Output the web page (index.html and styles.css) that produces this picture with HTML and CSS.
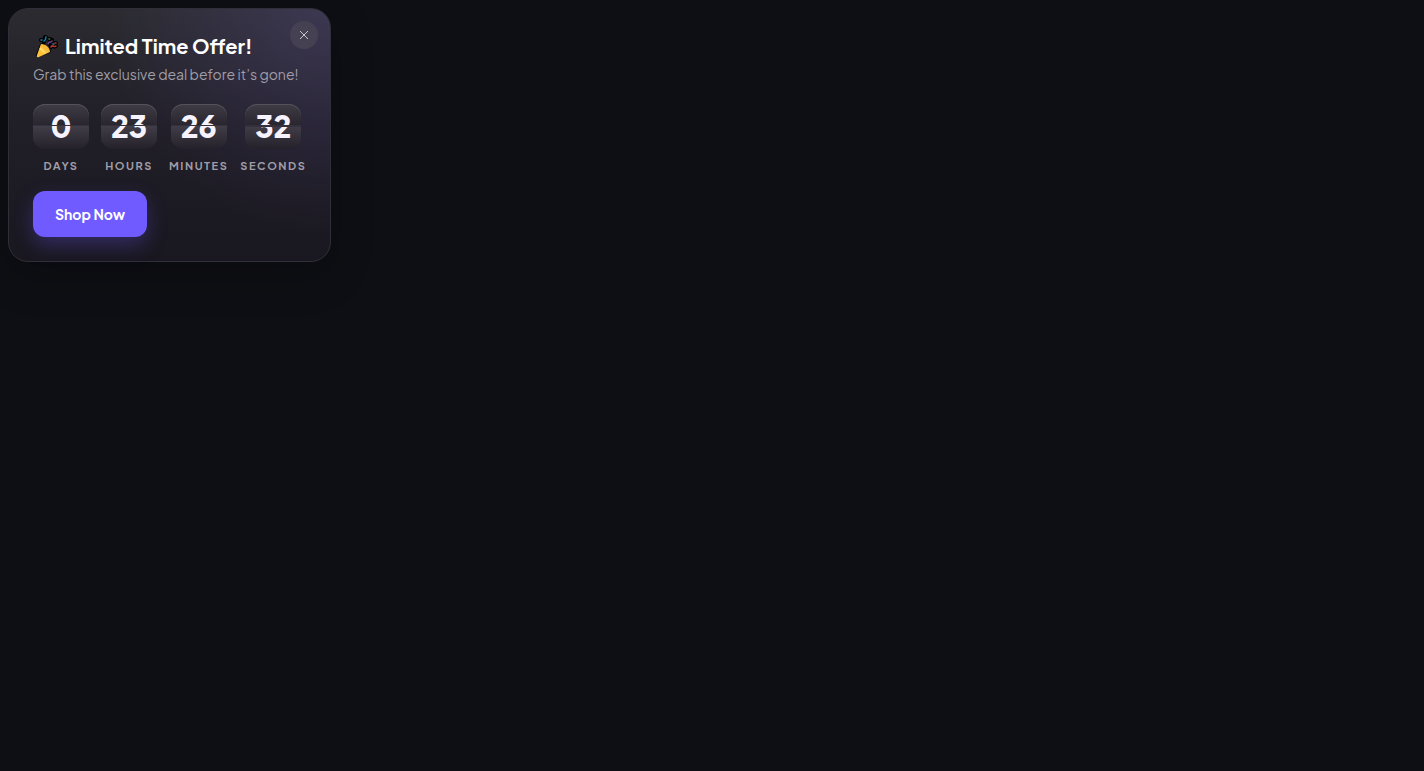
FILE: index.html
```html
<!DOCTYPE html>
<html lang="en">
<head>
<meta charset="utf-8">
<meta name="viewport" content="width=device-width, initial-scale=1">
<title>Limited Time Offer</title>
<link rel="stylesheet" href="styles.css">
</head>
<body>
<section class="offer" aria-labelledby="offer-title">
  <button class="close" type="button" aria-label="Close">
    <svg viewBox="0 0 10 10" width="10" height="10" aria-hidden="true"><path d="M1 1l8 8M9 1L1 9" fill="none" stroke="currentColor" stroke-width="1"/></svg>
  </button>
  <header class="heading">
    <h1 class="title" id="offer-title">
      <svg class="popper" viewBox="0 0 24 24" aria-hidden="true">
        <g fill="none" stroke="#000" stroke-width="4" stroke-linecap="round" stroke-linejoin="round">
          <path d="M7 11L3 21l11-4zM9 8l1-5 2 1M14 10c0-3 2-1 3-4M16 13c2-3 3 1 5-1M6 6h1M14 5h1M20 9h1"/>
        </g>
        <path d="M6 10L2 21q-1 3 2 2l11-5q-2-6-9-8z" fill="#fbc13c"/>
        <path d="M6 10c5 0 9 4 9 8-4-1-8-4-9-8z" fill="#f4b83c"/>
        <path d="M5 14l5 5" stroke="#ffdb69" stroke-width="2"/>
        <g fill="none" stroke-width="1.6" stroke-linecap="round">
          <path d="M9 7c3-1 1-3 2-4" stroke="#147da8"/>
          <path d="M13 10c0-3 3-1 4-3" stroke="#694389"/>
          <path d="M16 13c2-3 3 1 5-1" stroke="#b83730"/>
          <path d="M6 6h1M18 10h1" stroke="#247cad"/>
          <path d="M14 5h.5" stroke="#388b4c"/>
          <path d="M20 9h1" stroke="#a73a2d"/>
        </g>
      </svg>
      <span>Limited Time Offer!</span>
    </h1>
    <p class="subtitle">Grab this exclusive deal before it’s gone!</p>
  </header>
  <div class="countdown" role="timer">
    <div class="unit"><span class="value">0</span><span class="label">Days</span></div>
    <div class="unit"><span class="value">23</span><span class="label">Hours</span></div>
    <div class="unit"><span class="value">26</span><span class="label">Minutes</span></div>
    <div class="unit"><span class="value split">32</span><span class="label">Seconds</span></div>
  </div>
  <button class="shop" type="button">Shop Now</button>
</section>
</body>
</html>
```
FILE: styles.css
```css
* { box-sizing: border-box; }

body {
  min-height: 100vh;
  margin: 0;
  padding: 8px;
  background: #0e0f14;
  color: #fff;
  font-family: "Plus Jakarta Sans", Inter, sans-serif;
}

.offer {
  position: relative;
  display: flex;
  flex-direction: column;
  align-items: flex-start;
  gap: 19px;
  width: fit-content;
  max-width: 100%;
  padding: 24px;
  border: 1px solid #302e38;
  border-radius: 20px;
  background:
    radial-gradient(circle at 100% 0, rgba(112, 94, 180, 0.26), transparent 55%),
    linear-gradient(180deg, #2b2b30, #201e27 48%, #19171f);
  box-shadow: 0 12px 40px rgba(0, 0, 0, 0.25);
}

.close {
  position: absolute;
  top: 12px;
  right: 12px;
  display: grid;
  place-items: center;
  width: 28px;
  height: 28px;
  padding: 0;
  border: 0;
  border-radius: 50%;
  background: #454152;
  color: #c7c4ce;
}

.heading { display: grid; gap: 4px; }

.title {
  display: flex;
  align-items: center;
  gap: 6px;
  margin: 0;
  padding-left: 2px;
  font-size: 20px;
  font-weight: 700;
  line-height: 26px;
}

.popper { width: 24px; height: 24px; }

.subtitle {
  margin: 0;
  color: #a09da6;
  font-size: 14px;
  line-height: 22px;
}

.countdown { display: flex; gap: 12px; }

.unit {
  display: flex;
  flex-direction: column;
  align-items: center;
  gap: 10px;
  min-width: 56px;
}

.value {
  position: relative;
  width: 56px;
  border-radius: 12px;
  background: linear-gradient(180deg, #403c46, #28252e 48%, #413d48 50%, #24212a);
  box-shadow: inset 0 1px 0 #56525b;
  color: #f6f3ff;
  font-size: 30px;
  font-weight: 800;
  line-height: 45px;
  text-align: center;
}

.value::after {
  content: "";
  position: absolute;
  inset: 21px 0 auto;
  height: 1px;
  background: #35313c;
}

.split::after { height: 2px; }

.label {
  color: #a09da6;
  font-size: 11px;
  font-weight: 700;
  letter-spacing: 0.14em;
  line-height: 13px;
  text-transform: uppercase;
}

.shop {
  padding: 12px 22px;
  border: 0;
  border-radius: 12px;
  background: #6f5bff;
  box-shadow: 0 8px 20px rgba(96, 78, 220, 0.35);
  color: #fff;
  font: inherit;
  font-size: 14px;
  font-weight: 700;
  line-height: 22px;
}
```
